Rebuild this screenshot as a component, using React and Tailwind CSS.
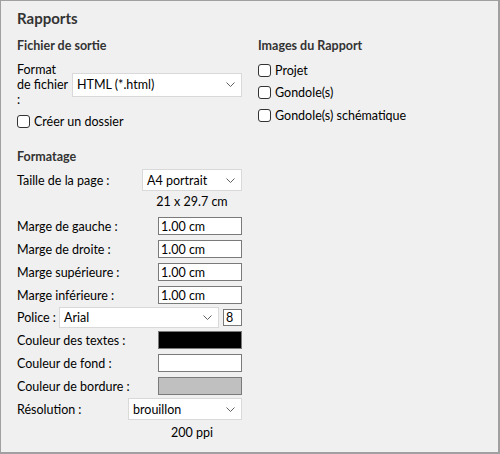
import React from 'react';

const Chevron = () => (
  <svg width="9" height="5" viewBox="0 0 9 5" className="shrink-0">
    <polyline points="0.5,0.5 4.5,4.5 8.5,0.5" fill="none" stroke="#606060" strokeWidth="1" />
  </svg>
);

const Select = ({ value, className }) => (
  <div className={`flex items-center justify-between bg-white border border-[#d9d9d9] pl-[4px] pr-[6px] ${className}`}>
    <span>{value}</span>
    <Chevron />
  </div>
);

const Checkbox = ({ label }) => (
  <div className="flex items-center h-[16px]">
    <div className="w-[13px] h-[13px] bg-white border border-[#333] rounded-[3px] mr-[4px]" />
    <span>{label}</span>
  </div>
);

const TextRow = ({ label, value }) => (
  <div className="flex items-center justify-between h-[18px]">
    <span>{label}</span>
    <div className="w-[84px] h-[18px] bg-white border border-[#7a7a7a] pl-[2px] flex items-center">{value}</div>
  </div>
);

const ColorRow = ({ label, color }) => (
  <div className="flex items-center justify-between h-[18px]">
    <span>{label}</span>
    <div className={`w-[84px] h-[18px] border border-[#7a7a7a] ${color}`} />
  </div>
);

const Heading = ({ children, className = '' }) => (
  <div className={`h-[16px] leading-[16px] text-[12.5px] font-bold text-[#333] ${className}`}>{children}</div>
);

export default function App() {
  return (
    <div
      className="w-[500px] h-[454px] bg-[#f0f0f0] border-t border-l border-r-2 border-b-2 border-[#a0a0a0] text-[12.5px] text-black leading-[15px] overflow-hidden"
      style={{ fontFamily: 'Lato, "Noto Sans", sans-serif' }}
    >
      <div className="pl-[16px] pt-[7px]">
        <div className="h-[20px] leading-[20px] text-[15px] font-bold text-[#333]">Rapports</div>

        <div className="flex mt-[10px]">
          {/* Left column */}
          <div className="w-[225px] flex flex-col">
            <Heading>Fichier de sortie</Heading>

            <div className="flex items-center mt-[8px] h-[45px]">
              <div className="w-[55px] leading-[15px]">
                <div>Format</div>
                <div>de fichier</div>
                <div>:</div>
              </div>
              <Select value="HTML (*.html)" className="w-[170px] h-[24px]" />
            </div>

            <div className="mt-[6px]">
              <Checkbox label="Créer un dossier" />
            </div>

            <Heading className="mt-[20px]">Formatage</Heading>

            <div className="flex items-center justify-between h-[22px] mt-[4px]">
              <span>Taille de la page&#8239;:</span>
              <Select value="A4 portrait" className="w-[100px] h-[22px]" />
            </div>
            <div className="flex justify-end h-[16px] leading-[16px] mt-[3px]">
              <div className="w-[100px] text-center">21 x 29.7 cm</div>
            </div>

            <div className="flex flex-col gap-[5px] mt-[7px]">
              <TextRow label={'Marge de gauche\u202F:'} value="1.00 cm" />
              <TextRow label={'Marge de droite\u202F:'} value="1.00 cm" />
              <TextRow label={'Marge supérieure\u202F:'} value="1.00 cm" />
              <TextRow label={'Marge inférieure\u202F:'} value="1.00 cm" />
            </div>

            <div className="flex items-center h-[21px] mt-[3px]">
              <span className="w-[42px]">Police&#8239;:</span>
              <Select value="Arial" className="w-[160px] h-[21px]" />
              <div className="ml-auto w-[19px] h-[17px] bg-white border border-[#7a7a7a] pl-[2px] flex items-center">8</div>
            </div>

            <div className="flex flex-col gap-[5px] mt-[3px]">
              <ColorRow label={'Couleur des textes\u202F:'} color="bg-black" />
              <ColorRow label={'Couleur de fond\u202F:'} color="bg-white" />
              <ColorRow label={'Couleur de bordure\u202F:'} color="bg-[#c0c0c0]" />
            </div>

            <div className="flex items-center justify-between h-[22px] mt-[3px]">
              <span>Résolution&#8239;:</span>
              <Select value="brouillon" className="w-[114px] h-[22px]" />
            </div>
            <div className="flex justify-end h-[16px] leading-[16px] mt-[5px]">
              <div className="w-[100px] text-center">200 ppi</div>
            </div>
          </div>

          {/* Right column */}
          <div className="ml-[16px] flex flex-col">
            <Heading>Images du Rapport</Heading>
            <div className="flex flex-col gap-[6.5px] mt-[8px]">
              <Checkbox label="Projet" />
              <Checkbox label="Gondole(s)" />
              <Checkbox label="Gondole(s) schématique" />
            </div>
          </div>
        </div>
      </div>
    </div>
  );
}
